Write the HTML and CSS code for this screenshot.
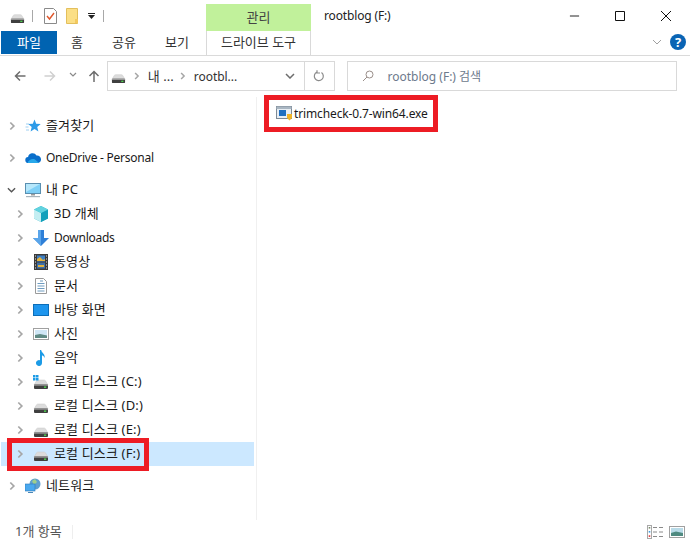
FILE: index.html
```html
<!DOCTYPE html>
<html lang="ko">
<head>
<meta charset="utf-8">
<title>rootblog (F:)</title>
<link rel="stylesheet" href="styles.css">
</head>
<body>
<svg class="defs" width="0" height="0">
  <defs>
    <symbol id="disk" viewBox="0 0 16 16">
      <path d="M1 11 3.500 6.800Q4 6 5 6h6q1 0 1.500.8L15 11z" fill="#dcdcdc" stroke="#c8c8c8" stroke-width=".5"/>
      <rect x="1" y="10.500" width="14" height="4.500" rx="1" fill="#3f3f3f"/>
      <rect x="1" y="10.500" width="14" height="1.200" fill="#9a9a9a"/>
      <rect x="11" y="12.500" width="2.200" height="1.300" fill="#4fe04f"/>
    </symbol>
    <symbol id="chev" viewBox="0 0 8 10">
      <path d="M1.500 1 5.500 5 1.500 9" fill="none" stroke="#a6a6a6" stroke-width="2"/>
    </symbol>
  </defs>
</svg>
<div class="window">
  <header class="titlebar">
    <div class="qat">
      <svg class="qi-disk"><use href="#disk"/></svg>
      <span class="qsep"></span>
      <svg class="qi-doc" viewBox="0 0 13 16"><path d="M.5.5h9l3 3v12H.5z" fill="#fff" stroke="#8a8a8a"/><path d="M3 8l2.500 3L10 5" fill="none" stroke="#e0562b" stroke-width="1.400"/></svg>
      <svg class="qi-folder" viewBox="0 0 13 16"><path d="M.5.5h11v15H.5z" fill="#fbdf86" stroke="#e3bf5c"/><path d="M9 11h3v4H9z" fill="#f3c95f"/></svg>
      <svg class="qi-drop" viewBox="0 0 7 6"><path d="M0 0h7v1H0zM0 2h7L3.500 6z" fill="#222"/></svg>
      <span class="qsep"></span>
    </div>
    <div class="context-head">관리</div>
    <div class="title">rootblog (F:)</div>
    <div class="winctl">
      <svg class="wc" viewBox="0 0 12 12"><path d="M1 6h10" stroke="#111" fill="none"/></svg>
      <svg class="wc" viewBox="0 0 12 12"><path d="M1.500 1.500h9v9h-9z" stroke="#111" fill="none"/></svg>
      <svg class="wc" viewBox="0 0 12 12"><path d="M1 1l10 10M11 1 1 11" stroke="#111" fill="none"/></svg>
    </div>
  </header>

  <nav class="ribbon">
    <div class="tab tab-file">파일</div>
    <div class="tab tab-home">홈</div>
    <div class="tab tab-share">공유</div>
    <div class="tab tab-view">보기</div>
    <div class="tab tab-drive">드라이브 도구</div>
    <div class="ribbon-end">
      <svg class="rb-chev" viewBox="0 0 10 6"><path d="M1 1l4 4 4-4" fill="none" stroke="#a0a0a0"/></svg>
      <svg class="help" viewBox="0 0 16 16"><circle cx="8" cy="8" r="8" fill="#0a64b4"/><text x="8" y="12.500" class="help-t">?</text></svg>
    </div>
  </nav>

  <div class="addr-row">
    <div class="nav-btns">
      <svg class="nb nb-back" viewBox="0 0 12 12"><path d="M11.500 6H1.500M6 1.500 1.500 6 6 10.500" fill="none" stroke="#6d6d6d" stroke-width="1.500"/></svg>
      <svg class="nb nb-fwd" viewBox="0 0 12 12"><path d="M.5 6h10M6 1.500 10.500 6 6 10.500" fill="none" stroke="#d0d0d0" stroke-width="1.500"/></svg>
      <svg class="nb-down" viewBox="0 0 8 5"><path d="M1 1l3 3 3-3" fill="none" stroke="#8a8a8a" stroke-width="1.200"/></svg>
      <svg class="nb nb-up" viewBox="0 0 12 12"><path d="M6 12V1.500M1.500 6 6 1.500 10.500 6" fill="none" stroke="#6d6d6d" stroke-width="1.500"/></svg>
    </div>
    <div class="addr">
      <svg class="addr-disk"><use href="#disk"/></svg>
      <svg class="addr-chev"><use href="#chev"/></svg>
      <span class="crumb crumb-a">내 ...</span>
      <svg class="addr-chev"><use href="#chev"/></svg>
      <span class="crumb crumb-b">rootbl...</span>
      <svg class="addr-drop" viewBox="0 0 10 6"><path d="M1 1l4 4 4-4" fill="none" stroke="#6d6d6d" stroke-width="1.500"/></svg>
      <div class="refresh">
        <svg viewBox="0 0 12 12" class="refresh-i"><path d="M8.500 2.500A4.500 4.500 0 1 1 4 2M4 .2V3h3" fill="none" stroke="#8a8a8a" stroke-width="1.200"/></svg>
      </div>
    </div>
    <div class="search">
      <svg class="mag" viewBox="0 0 12 12"><circle cx="7.500" cy="4.500" r="3.500" fill="none" stroke="#9a8f8a"/><path d="M5 7 1 11" stroke="#9a8f8a" fill="none"/></svg>
      <span>rootblog (F:) 검색</span>
    </div>
  </div>

  <main class="main">
    <aside class="tree">
      <div class="row top">
        <svg class="chev"><use href="#chev"/></svg>
        <svg class="ic" viewBox="0 0 16 16"><path d="M9.500 1.500l1.700 4.300 4.500.3-3.500 2.900 1.200 4.500-3.900-2.500-3.900 2.500L6.700 8.900 3.200 6l4.600-.2z" fill="#2d9be8"/><path d="M1 6h3M.5 9h3M1 12h3" stroke="#9fd0f2" fill="none"/></svg>
        <span class="label">즐겨찾기</span>
      </div>
      <div class="row top">
        <svg class="chev"><use href="#chev"/></svg>
        <svg class="ic" viewBox="0 0 16 16"><path d="M3.500 13a3 3 0 0 1-.4-6A4.500 4.500 0 0 1 11.500 5.500 3.800 3.800 0 0 1 16 9.500 3.500 3.500 0 0 1 13 13z" fill="#0a6fcb"/><path d="M3.500 13a3 3 0 0 1-1-.2C4 10 7 8 10 9.500L14 13z" fill="#28a8ea"/></svg>
        <span class="label latin">OneDrive - Personal</span>
      </div>
      <div class="row top">
        <svg class="chev-open" viewBox="0 0 10 6"><path d="M1 1l4 4 4-4" fill="none" stroke="#555" stroke-width="1.500"/></svg>
        <svg class="ic" viewBox="0 0 16 16"><rect x=".5" y="1.500" width="15" height="10" fill="#7fd0f7" stroke="#5a8fb0"/><path d="M1 2h14L1 10z" fill="#b6e7fb"/><path d="M6 12h4v1.500H6z" fill="#9a9a9a"/><path d="M1 14h14v1.200H1z" fill="#a8b4bc"/></svg>
        <span class="label">내 PC</span>
      </div>
      <div class="row sub">
        <svg class="chev"><use href="#chev"/></svg>
        <svg class="ic" viewBox="0 0 16 16"><path d="M8 0l7 3.500v9L8 16 1 12.500v-9z" fill="#2fb6c8"/><path d="M1 3.500 8 7v9L1 12.500z" fill="#c4eef2"/><path d="M8 7l7-3.500v9L8 16z" fill="#14a0bb"/><path d="M8 0l7 3.500L8 7 1 3.500z" fill="#62d2df"/></svg>
        <span class="label">3D 개체</span>
      </div>
      <div class="row sub">
        <svg class="chev"><use href="#chev"/></svg>
        <svg class="ic" viewBox="0 0 16 16"><path d="M5 0h6v8h5l-8 8-8-8h5z" fill="#2f80d8"/><path d="M5 0h3v16L0 8h5z" fill="#5aa5ea"/></svg>
        <span class="label latin">Downloads</span>
      </div>
      <div class="row sub">
        <svg class="chev"><use href="#chev"/></svg>
        <svg class="ic" viewBox="0 0 16 16"><rect x="1" y="0" width="14" height="16" fill="#3a3a3a"/><rect x="4" y="1.500" width="8" height="6" fill="#3e7fc4"/><rect x="4" y="8.500" width="8" height="6" fill="#3e6fa8"/><path d="M4 5l3-2 3 3 2-1v2H4zM5 11h6v2H5z" fill="#e3b23c"/><path d="M2 1.500h1v1H2zM2 4.500h1v1H2zM2 7.500h1v1H2zM2 10.500h1v1H2zM2 13.500h1v1H2zM13 1.500h1v1h-1zM13 4.500h1v1h-1zM13 7.500h1v1h-1zM13 10.500h1v1h-1zM13 13.500h1v1h-1z" fill="#e8e8e8"/></svg>
        <span class="label">동영상</span>
      </div>
      <div class="row sub">
        <svg class="chev"><use href="#chev"/></svg>
        <svg class="ic" viewBox="0 0 16 16"><path d="M2.500.5h8l3 3v12h-11z" fill="#fff" stroke="#9a9a9a"/><path d="M7 3h3M4.500 5.500h7M4.500 8h7M4.500 10.500h7M4.500 13h7" stroke="#6f9cc0" fill="none"/></svg>
        <span class="label">문서</span>
      </div>
      <div class="row sub">
        <svg class="chev"><use href="#chev"/></svg>
        <svg class="ic" viewBox="0 0 16 16"><rect x="0" y="2" width="16" height="12" fill="#0d6eb8"/><rect x="1" y="3" width="14" height="10" fill="#1e96ee"/></svg>
        <span class="label">바탕 화면</span>
      </div>
      <div class="row sub">
        <svg class="chev"><use href="#chev"/></svg>
        <svg class="ic" viewBox="0 0 16 16"><rect x=".5" y="2.500" width="15" height="11" fill="#fff" stroke="#a0a0a0"/><rect x="2" y="4" width="12" height="8" fill="#cfe6f5"/><path d="M2 9l5-1 7 1.500V12H2z" fill="#5f8a84"/></svg>
        <span class="label">사진</span>
      </div>
      <div class="row sub">
        <svg class="chev"><use href="#chev"/></svg>
        <svg class="ic" viewBox="0 0 16 16"><path d="M7 0h1.200c.3 3 4 3.500 3.500 8C11 6 9.500 5.500 9 5.500V13a3 3 0 1 1-2-2.800z" fill="#1c9be6"/></svg>
        <span class="label">음악</span>
      </div>
      <div class="row sub">
        <svg class="chev"><use href="#chev"/></svg>
        <svg class="ic" viewBox="0 0 16 16"><use href="#disk" width="16" height="16"/><path d="M0 1h2.500v2.500H0zM3 1h2.500v2.500H3zM0 4h2.500v2.500H0zM3 4h2.500v2.500H3z" fill="#1c9be6"/></svg>
        <span class="label">로컬 디스크 (C:)</span>
      </div>
      <div class="row sub">
        <svg class="chev"><use href="#chev"/></svg>
        <svg class="ic"><use href="#disk"/></svg>
        <span class="label">로컬 디스크 (D:)</span>
      </div>
      <div class="row sub">
        <svg class="chev"><use href="#chev"/></svg>
        <svg class="ic"><use href="#disk"/></svg>
        <span class="label">로컬 디스크 (E:)</span>
      </div>
      <div class="row sub selected">
        <svg class="chev"><use href="#chev"/></svg>
        <svg class="ic"><use href="#disk"/></svg>
        <span class="label">로컬 디스크 (F:)</span>
      </div>
      <div class="row top">
        <svg class="chev"><use href="#chev"/></svg>
        <svg class="ic" viewBox="0 0 16 16"><circle cx="10" cy="6" r="5.500" fill="#5f9fd0"/><path d="M7 3l3-2 2 3-3 3z" fill="#9fcf8c"/><rect x="0" y="6" width="10" height="7" fill="#4aa8ee" stroke="#2b78b8" stroke-width=".6"/><path d="M3 14.500h5" stroke="#4a88b8" fill="none"/></svg>
        <span class="label">네트워크</span>
      </div>
    </aside>
    <section class="files">
      <div class="file">
        <svg class="file-ic" viewBox="0 0 16 16"><rect x=".5" y="1.500" width="15" height="12" fill="#e8eef4" stroke="#7d8a96"/><rect x=".5" y="1.500" width="15" height="2.500" fill="#a9b6c2"/><rect x="3" y="5" width="7" height="6" fill="#1f6fc0"/><path d="M11 9h5v4l-2.500 2.500L11 13z" fill="#f0b429"/></svg>
        <span>trimcheck-0.7-win64.exe</span>
      </div>
    </section>
  </main>

  <footer class="status">
    <span class="count">1개 항목</span>
    <span class="status-sep"></span>
    <div class="views">
      <svg class="view-i" viewBox="0 0 16 14"><rect x=".5" y=".5" width="4" height="13" fill="#fff" stroke="#a8a8a8"/><path d="M1.700 2h1.600v1.600H1.700z" fill="#7a8a6a"/><path d="M1.700 6h1.600v1.600H1.700z" fill="#3b9be0"/><path d="M1.700 10.300h1.600v1.600H1.700z" fill="#d33"/><path d="M6 2.500h4M12 2.500h4M6 7h4M12 7h4M6 11.500h4M12 11.500h4" stroke="#8a8a8a" fill="none"/></svg>
      <svg class="view-p" viewBox="0 0 16 12"><rect x=".5" y=".5" width="15" height="11" fill="#fff" stroke="#a0a0a0"/><rect x="2" y="2" width="12" height="8" fill="#b9dbe8"/><path d="M2 7l5-1.500L14 7v3H2z" fill="#4f8a80"/></svg>
    </div>
  </footer>

  <div class="mark mark-tree"></div>
  <div class="mark mark-file"></div>
</div>
</body>
</html>
```
FILE: styles.css
```css
* { box-sizing: border-box; }
html, body { margin: 0; padding: 0; background: #fff; }
body {
  font-family: "Noto Sans", "Noto Sans CJK KR", sans-serif;
  font-size: 12px;
  color: #1a1a1a;
  overflow: hidden;
}
.defs { position: absolute; }
svg { display: block; flex: none; }

.window {
  position: relative;
  width: 690px;
  height: 544px;
  display: flex;
  flex-direction: column;
}

/* title bar */
.titlebar { height: 31px; display: flex; align-items: flex-end; }
.qat { width: 206px; height: 27px; display: flex; align-items: center; padding-left: 10px; padding-bottom: 3px; }
.qi-disk { width: 15px; height: 15px; margin-right: 7px; }
.qsep { width: 1px; height: 12px; background: #a8a8a8; }
.qi-doc { width: 13px; height: 16px; margin-left: 11px; }
.qi-folder { width: 13px; height: 16px; margin-left: 9px; }
.qi-drop { width: 7px; height: 6px; margin-left: 9px; margin-right: 8px; }
.context-head {
  width: 105px;
  height: 27px;
  padding-bottom: 2px;
  background: #c1f19b;
  color: #444;
  font-size: 13px;
  display: flex;
  align-items: center;
  justify-content: center;
}
.title { margin-left: 13px; height: 27px; line-height: 23px; color: #222; letter-spacing: -.15px; }
.winctl { margin-left: auto; height: 31px; display: flex; align-items: center; padding-right: 18px; gap: 34px; }
.wc { width: 12px; height: 12px; }
.wc:first-child { width: 11px; }

/* ribbon */
.ribbon { height: 25px; display: flex; align-items: stretch; border-bottom: 1px solid #dadada; padding-left: 1px; }
.tab { display: flex; align-items: center; justify-content: center; height: 24px; padding-bottom: 3px; color: #333; font-size: 13px; }
.tab-file { width: 56px; background: #0063b1; color: #fff; height: 23px; padding-bottom: 2px; }
.tab-home { width: 40px; }
.tab-share { width: 54px; }
.tab-view { width: 52px; }
.tab-drive { width: 105px; margin-left: 3px; border-left: 1px solid #d9d9d9; border-right: 1px solid #d9d9d9; }
.ribbon-end { margin-left: auto; display: flex; align-items: center; gap: 8px; padding-right: 4px; padding-bottom: 2px; }
.rb-chev { width: 10px; height: 6px; }
.help { width: 16px; height: 16px; }
.help-t { font-size: 13px; font-weight: 700; fill: #fff; text-anchor: middle; }

/* address row */
.addr-row { height: 41px; padding: 5px 13px 0 14px; display: flex; align-items: flex-start; }
.nav-btns { width: 93px; height: 30px; display: flex; align-items: center; }
.nb { width: 12px; height: 12px; }
.nb-fwd { margin-left: 18px; }
.nb-down { width: 8px; height: 5px; margin-left: 13px; margin-bottom: 3px; }
.nb-up { margin-left: 11px; }
.addr {
  width: 228px;
  height: 30px;
  border: 1px solid #d9d9d9;
  display: flex;
  align-items: center;
  padding-left: 3px;
}
.addr-disk { width: 15px; height: 15px; }
.addr-chev { width: 6px; height: 8px; }
.addr-disk + .addr-chev { margin-left: 8px; }
.crumb-a { margin-left: 8px; width: 27px; white-space: nowrap; color: #333; font-size: 13px; margin-right: 5px; padding-bottom: 2px; }
.crumb-b { margin-left: 8px; white-space: nowrap; color: #333; letter-spacing: -.05px; }
.addr-drop { width: 10px; height: 6px; margin-left: auto; margin-right: 9px; }
.refresh { width: 30px; height: 28px; border-left: 1px solid #d9d9d9; display: flex; align-items: center; justify-content: center; }
.refresh-i { width: 12px; height: 12px; }
.search {
  width: 331px;
  height: 30px;
  margin-left: 12px;
  border: 1px solid #d9d9d9;
  display: flex;
  align-items: center;
  padding-left: 14px;
  gap: 14px;
  color: #6d7a8c;
}
.mag { width: 12px; height: 12px; }

/* main */
.main { flex: 1; min-height: 0; display: flex; }
.tree { width: 257px; padding: 17px 2px 0 1px; border-right: 1px solid #f0f0f0; }
.row { height: 24px; display: flex; align-items: center; white-space: nowrap; }
.row.top { margin-bottom: 8px; padding-left: 8px; }
.row.sub { padding-left: 16px; }
.row.sub:has(+ .row.top) { margin-bottom: 8px; }
.row.top:nth-child(3) { margin-bottom: 0; }
.chev { width: 7px; height: 10px; margin-right: 9px; }
.chev-open { width: 9px; height: 6px; margin-left: -2px; margin-right: 9px; }
.ic { width: 16px; height: 16px; margin-right: 5px; }
.label { font-size: 13px; letter-spacing: .15px; padding-bottom: 4px; }
.label.latin { font-size: 12px; letter-spacing: -.25px; padding-bottom: 2px; }
.selected { background: #cce8ff; }
.files { flex: 1; padding: 8px 0 0 19px; }
.file { height: 16px; display: flex; align-items: center; gap: 2px; color: #1a1a1a; letter-spacing: -.13px; }
.file-ic { width: 16px; height: 16px; }

/* status bar */
.status { height: 24px; display: flex; align-items: center; padding: 0 4px 0 15px; color: #555; }
.count { width: 57px; font-size: 13px; padding-bottom: 3px; }
.status-sep { width: 1px; height: 14px; background: #eee; }
.views { margin-left: auto; display: flex; align-items: center; gap: 6px; padding-right: 1px; }
.view-i { width: 16px; height: 14px; }
.view-p { width: 16px; height: 12px; }

/* red annotation boxes lying over the window */
.mark { position: absolute; border: 5px solid #ed1c24; }
.mark-tree { left: 7px; top: 438px; width: 142px; height: 33px; }
.mark-file { left: 264px; top: 95px; width: 174px; height: 37px; }
```
